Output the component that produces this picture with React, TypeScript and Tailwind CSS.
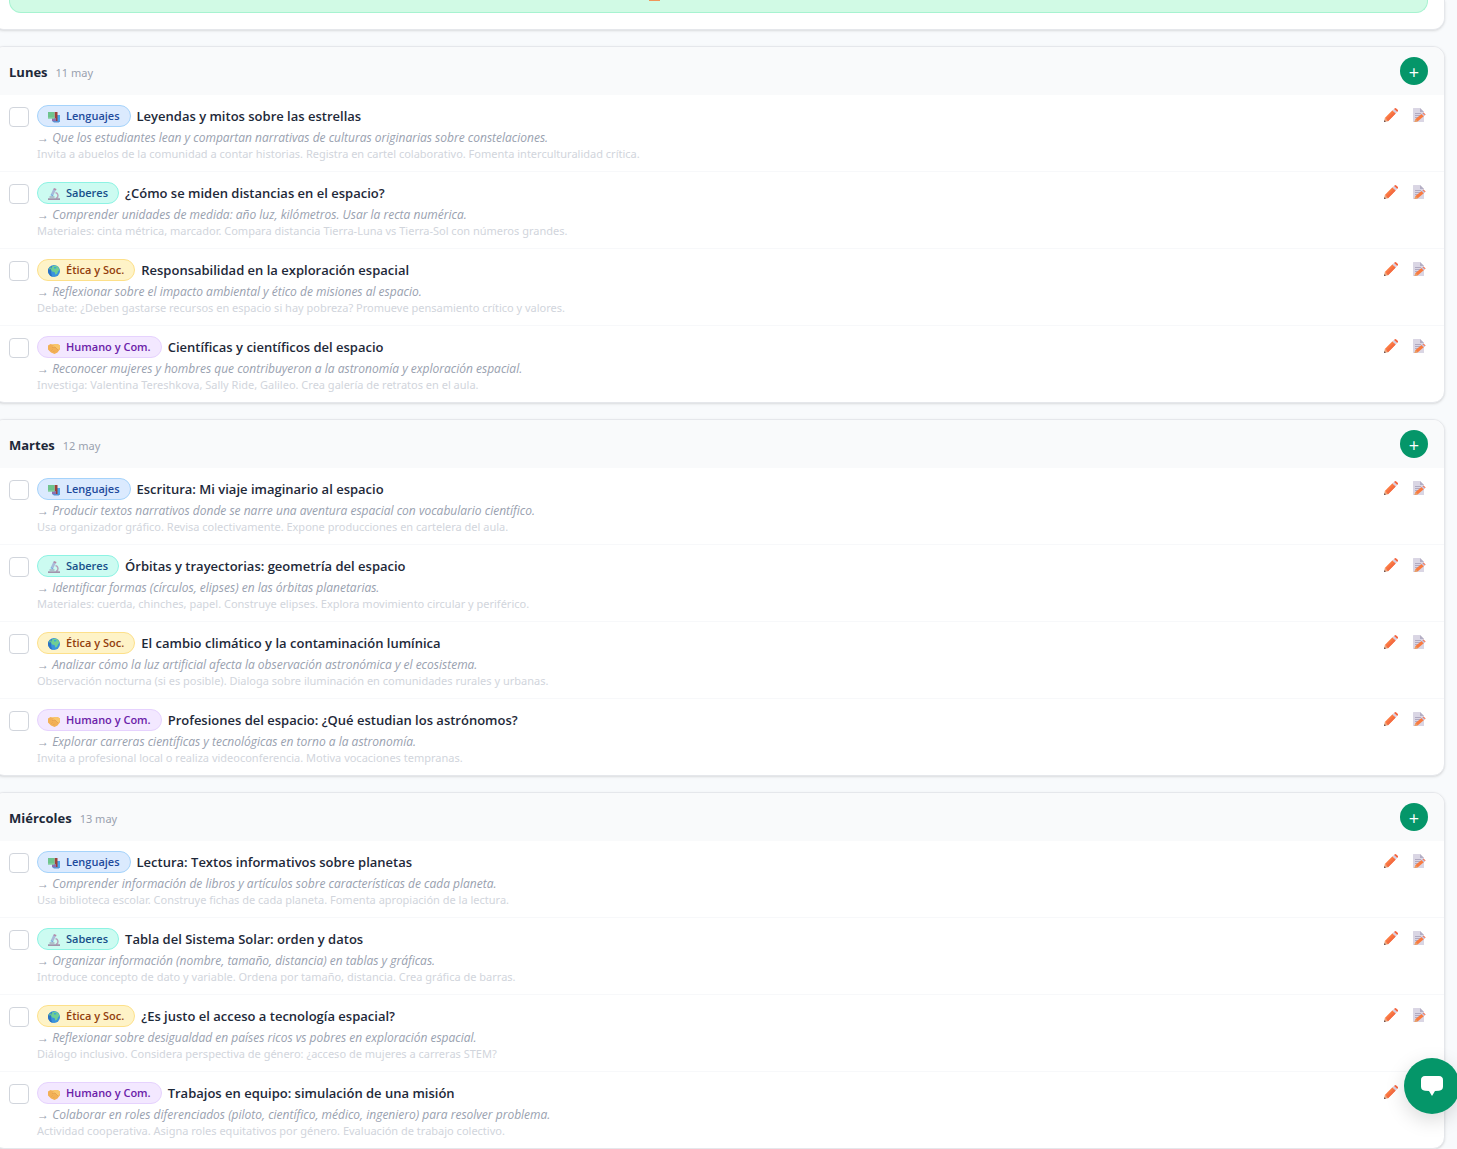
import React, { useState } from 'react';

type Subject = 'lenguajes' | 'saberes' | 'etica' | 'humano';

interface Activity {
  id: string;
  subject: Subject;
  title: string;
  goal: string;
  notes: string;
}

interface Day {
  name: string;
  date: string;
  activities: Activity[];
}

const DAYS: Day[] = [
  {
    name: 'Lunes',
    date: '11 may',
    activities: [
      {
        id: 'l1',
        subject: 'lenguajes',
        title: 'Leyendas y mitos sobre las estrellas',
        goal: 'Que los estudiantes lean y compartan narrativas de culturas originarias sobre constelaciones.',
        notes: 'Invita a abuelos de la comunidad a contar historias. Registra en cartel colaborativo. Fomenta interculturalidad crítica.',
      },
      {
        id: 'l2',
        subject: 'saberes',
        title: '¿Cómo se miden distancias en el espacio?',
        goal: 'Comprender unidades de medida: año luz, kilómetros. Usar la recta numérica.',
        notes: 'Materiales: cinta métrica, marcador. Compara distancia Tierra-Luna vs Tierra-Sol con números grandes.',
      },
      {
        id: 'l3',
        subject: 'etica',
        title: 'Responsabilidad en la exploración espacial',
        goal: 'Reflexionar sobre el impacto ambiental y ético de misiones al espacio.',
        notes: 'Debate: ¿Deben gastarse recursos en espacio si hay pobreza? Promueve pensamiento crítico y valores.',
      },
      {
        id: 'l4',
        subject: 'humano',
        title: 'Científicas y científicos del espacio',
        goal: 'Reconocer mujeres y hombres que contribuyeron a la astronomía y exploración espacial.',
        notes: 'Investiga: Valentina Tereshkova, Sally Ride, Galileo. Crea galería de retratos en el aula.',
      },
    ],
  },
  {
    name: 'Martes',
    date: '12 may',
    activities: [
      {
        id: 'm1',
        subject: 'lenguajes',
        title: 'Escritura: Mi viaje imaginario al espacio',
        goal: 'Producir textos narrativos donde se narre una aventura espacial con vocabulario científico.',
        notes: 'Usa organizador gráfico. Revisa colectivamente. Expone producciones en cartelera del aula.',
      },
      {
        id: 'm2',
        subject: 'saberes',
        title: 'Órbitas y trayectorias: geometría del espacio',
        goal: 'Identificar formas (círculos, elipses) en las órbitas planetarias.',
        notes: 'Materiales: cuerda, chinches, papel. Construye elipses. Explora movimiento circular y periférico.',
      },
      {
        id: 'm3',
        subject: 'etica',
        title: 'El cambio climático y la contaminación lumínica',
        goal: 'Analizar cómo la luz artificial afecta la observación astronómica y el ecosistema.',
        notes: 'Observación nocturna (si es posible). Dialoga sobre iluminación en comunidades rurales y urbanas.',
      },
      {
        id: 'm4',
        subject: 'humano',
        title: 'Profesiones del espacio: ¿Qué estudian los astrónomos?',
        goal: 'Explorar carreras científicas y tecnológicas en torno a la astronomía.',
        notes: 'Invita a profesional local o realiza videoconferencia. Motiva vocaciones tempranas.',
      },
    ],
  },
  {
    name: 'Miércoles',
    date: '13 may',
    activities: [
      {
        id: 'x1',
        subject: 'lenguajes',
        title: 'Lectura: Textos informativos sobre planetas',
        goal: 'Comprender información de libros y artículos sobre características de cada planeta.',
        notes: 'Usa biblioteca escolar. Construye fichas de cada planeta. Fomenta apropiación de la lectura.',
      },
      {
        id: 'x2',
        subject: 'saberes',
        title: 'Tabla del Sistema Solar: orden y datos',
        goal: 'Organizar información (nombre, tamaño, distancia) en tablas y gráficas.',
        notes: 'Introduce concepto de dato y variable. Ordena por tamaño, distancia. Crea gráfica de barras.',
      },
      {
        id: 'x3',
        subject: 'etica',
        title: '¿Es justo el acceso a tecnología espacial?',
        goal: 'Reflexionar sobre desigualdad en países ricos vs pobres en exploración espacial.',
        notes: 'Diálogo inclusivo. Considera perspectiva de género: ¿acceso de mujeres a carreras STEM?',
      },
      {
        id: 'x4',
        subject: 'humano',
        title: 'Trabajos en equipo: simulación de una misión',
        goal: 'Colaborar en roles diferenciados (piloto, científico, médico, ingeniero) para resolver problema.',
        notes: 'Actividad cooperativa. Asigna roles equitativos por género. Evaluación de trabajo colectivo.',
      },
    ],
  },
];

const BooksIcon = () => (
  <svg viewBox="0 0 12 12" className="w-3 h-3 shrink-0" aria-hidden="true">
    <path d="M8 4h4v7H8z" fill="#4aa3ea" />
    <path d="M4 10h7v1.5H6z" fill="#5b8fd0" />
    <path d="M6.500 1h3v9h-3z" fill="#9c3f38" />
    <path d="M4 7h4v3H4z" fill="#8d6fb0" />
    <path d="M0 1h6.500v6.500H0z" fill="#6fc48d" />
    <path d="M0 6.500h6.500v1H0z" fill="#8fd6a8" />
  </svg>
);

const MicroscopeIcon = () => (
  <svg viewBox="0 0 12 12" className="w-3 h-3 shrink-0" aria-hidden="true">
    <path d="M7.500 4.500c3 .8 3.500 4.500.5 6" fill="none" stroke="#b9a3bd" strokeWidth="1.500" />
    <path d="M5.500 .5 8 1.500 5.500 7 3 6z" fill="#a9b9d8" />
    <path d="M6 0 8.500 1 8 2.500 5.500 1.500z" fill="#b58ba8" />
    <path d="M3 6l2.500 1-.6 1.300-2.400-1z" fill="#7aa5dd" />
    <path d="M1.500 8.500h5v1h-5z" fill="#8e87a5" />
    <path d="M0 10.300h12V12H0z" fill="#a294ac" />
  </svg>
);

const GlobeIcon = () => (
  <svg viewBox="0 0 12 12" className="w-3 h-3 shrink-0" aria-hidden="true">
    <circle cx="6" cy="6" r="6" fill="#3a93dd" />
    <path d="M.8 3A6 6 0 0 0 5 11.900C3 10 2.500 6 4 1z" fill="#2b72c4" />
    <path d="M4 1.500 7 .6l3 1.200L11.500 5l-1.300 1-1 2.500-1.700 1.300-1-2.800-2.500-.6L3 4.500z" fill="#6fce92" />
    <path d="M1 3.500 2.500 2l.6 1.500L1.800 5z" fill="#62c98c" />
    <path d="M6 2h2.500L8 3.500H6z" fill="#3ba7d9" />
  </svg>
);

const HandshakeIcon = () => (
  <svg viewBox="0 0 12 12" className="w-3 h-3 shrink-0" aria-hidden="true">
    <path d="M0 3.500 2.500 2 6 3l3.500-1L12 3.500v3.800L9.500 10.500 6.500 12 3 10.500 0 7.500z" fill="#f2b056" />
    <path d="M2.500 2 6 3 4 5.500l3-.5 3 3L12 6V3.500L9.500 2z" fill="#f8c56b" />
    <path d="m4 5.500 3-.5 3 3M3.500 8.500l1-1M5.500 9.800l1-1" fill="none" stroke="#e09a4b" strokeWidth=".7" />
  </svg>
);

const PencilIcon = () => (
  <svg viewBox="0 0 14 14" className="w-3.5 h-3.5" aria-hidden="true">
    <path d="M0 14 .8 10 4 13.200z" fill="#e8a578" />
    <path d="M0 14 .4 12.200 1.800 13.600z" fill="#3f3544" />
    <path d="M.8 10 8.500 2.300l3.200 3.200L4 13.200z" fill="#fb7a42" />
    <path d="m2.400 11.600 7.700-7.700 1.600 1.600L4 13.200z" fill="#f46c42" />
    <path d="M8.500 2.300 10 .9l3.200 3.200-1.500 1.400z" fill="#d5cfe3" />
    <path d="M10 .9 10.900.2q.7-.4 1.400.2l1.400 1.400q.6.7.1 1.400l-.6.900z" fill="#f4653f" />
  </svg>
);

const MemoIcon = () => (
  <svg viewBox="0 0 14 14" className="w-3.5 h-3.5" aria-hidden="true">
    <path d="M1 .5q0-.5.5-.5H8l4 4v10H1z" fill="#dad6e4" />
    <path d="M8 0l4 4H8z" fill="#b4aec4" />
    <path d="M3 5.500h6M3 7.500h6M3 9.500h4" stroke="#b0a9c0" strokeWidth="1" />
    <path d="M2.500 14 3.500 11 9.500 6l2.300 2.300-6 5z" fill="#fa7b40" />
    <path d="m9.500 6 1.200-1 2.300 2.300-1.200 1z" fill="#c9bcd2" />
    <path d="m10.700 5 1-.3L13.600 6.500l-.6.800z" fill="#f4653f" />
    <path d="M2.500 14 3.500 11l2.300 2.300z" fill="#e3a36c" />
  </svg>
);

const SUBJECTS: Record<Subject, { label: string; className: string; Icon: React.FC }> = {
  lenguajes: { label: 'Lenguajes', className: 'bg-[#dbeafe] border-[#a5d3fb] text-[#1e4a9c]', Icon: BooksIcon },
  saberes: { label: 'Saberes', className: 'bg-[#ccfbf1] border-[#8df3e3] text-[#17508a]', Icon: MicroscopeIcon },
  etica: { label: 'Ética y Soc.', className: 'bg-[#fef3c7] border-[#fde08a] text-[#92400e]', Icon: GlobeIcon },
  humano: { label: 'Humano y Com.', className: 'bg-[#f3e8ff] border-[#e6d2fe] text-[#6b21a8]', Icon: HandshakeIcon },
};

interface ActivityRowProps {
  activity: Activity;
  done: boolean;
  onToggle: () => void;
}

const ActivityRow: React.FC<ActivityRowProps> = ({ activity, done, onToggle }) => {
  const { label, className, Icon } = SUBJECTS[activity.subject];

  return (
    <li className="flex items-start gap-2 pl-4 pr-[11px] pt-2.5 pb-[9px] border-b border-[#f7f8fa] last:border-b-0">
      <input
        id={activity.id}
        type="checkbox"
        checked={done}
        onChange={onToggle}
        className="appearance-none w-5 h-5 mt-0.5 shrink-0 rounded-sm border border-gray-300 bg-white checked:bg-[#059669] checked:border-[#059669] cursor-pointer"
      />
      <div className="flex-1 min-w-0">
        <div className="flex items-center gap-1.5 mb-[3px]">
          <span className={`inline-flex items-center gap-1.5 h-[22px] px-2.5 pt-px rounded-full border text-[11px] font-semibold whitespace-nowrap ${className}`}>
            <Icon />
            {label}
          </span>
          <label htmlFor={activity.id} className={`text-[13px] leading-5 font-semibold text-gray-800 ${done ? 'line-through opacity-60' : ''}`}>
            {activity.title}
          </label>
        </div>
        <p className="text-[12px] leading-4 italic text-gray-400">→ {activity.goal}</p>
        <p className="font-['Noto_Sans',sans-serif] text-[11px] leading-4 text-gray-300">{activity.notes}</p>
      </div>
      <div className="flex shrink-0">
        <button type="button" title="Editar" className="w-7 h-5 flex items-center justify-center cursor-pointer">
          <PencilIcon />
        </button>
        <button type="button" title="Notas" className="w-7 h-5 flex items-center justify-center cursor-pointer">
          <MemoIcon />
        </button>
      </div>
    </li>
  );
};

export default function App() {
  const [done, setDone] = useState<Record<string, boolean>>({});

  const toggle = (id: string) => setDone((prev) => ({ ...prev, [id]: !prev[id] }));

  return (
    <div className="min-h-screen overflow-x-hidden bg-[#f8fafc] font-['Open_Sans',sans-serif]">
      <main className="-ml-2 mr-3 flex flex-col gap-4">
        {/* End of the summary card */}
        <section className="rounded-b-xl border border-t-0 border-gray-200 bg-white px-4 pb-4 shadow-sm">
          <div className="h-[13px] flex justify-center items-start rounded-b-xl border border-t-0 border-[#a7f3d0] bg-[#d1fae5]">
            <span className="w-[11px] h-px mr-32 bg-[#f0955a]" />
          </div>
        </section>

        {DAYS.map((day) => (
          <section key={day.name} className="rounded-xl border border-gray-200 bg-white shadow-sm overflow-hidden">
            <header className="flex items-center justify-between px-4 py-2.5 bg-[#f9fafb]">
              <div className="flex items-baseline gap-2 pt-0.5">
                <h2 className="text-[13px] leading-5 font-bold text-gray-800">{day.name}</h2>
                <span className="font-['Noto_Sans',sans-serif] text-[11px] leading-5 text-gray-400">{day.date}</span>
              </div>
              <button
                type="button"
                title="Agregar actividad"
                className="w-7 h-7 pt-0.5 flex items-center justify-center rounded-full bg-[#059669] text-white text-lg cursor-pointer"
              >
                +
              </button>
            </header>
            <ul>
              {day.activities.map((activity) => (
                <ActivityRow
                  key={activity.id}
                  activity={activity}
                  done={!!done[activity.id]}
                  onToggle={() => toggle(activity.id)}
                />
              ))}
            </ul>
          </section>
        ))}
      </main>

      {/* Chat */}
      <button
        type="button"
        title="Chat"
        className="fixed -right-[3px] bottom-[35px] w-14 h-14 flex items-center justify-center rounded-full bg-[#059669] shadow-[0_6px_20px_rgba(0,0,0,0.15)] cursor-pointer"
      >
        <svg viewBox="0 0 22 20" className="w-[22px] h-5" aria-hidden="true">
          <path d="M4 0Q11-.6 18 0q4 .3 4 4v6.500q0 4-4 4.200l-4 .3L11 20l-3-5-4-.3q-4-.2-4-4.200V4Q0 .3 4 0z" fill="#fff" />
        </svg>
      </button>
    </div>
  );
}
